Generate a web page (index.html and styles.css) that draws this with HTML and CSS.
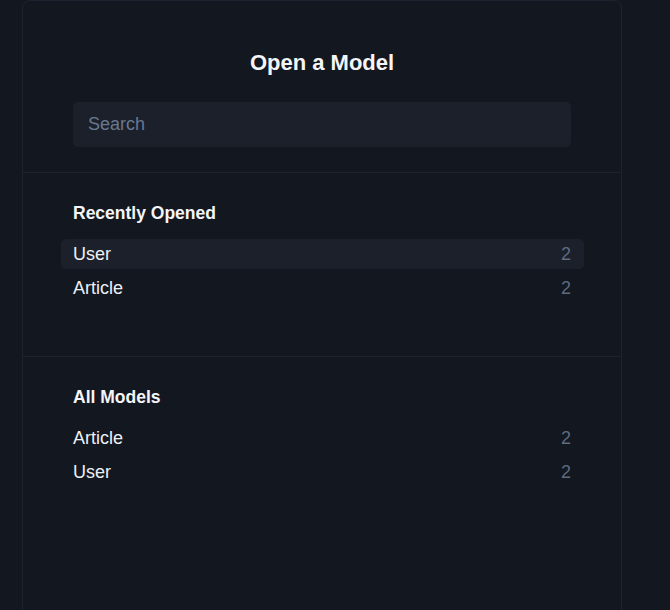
FILE: index.html
```html
<!DOCTYPE html>
<html lang="en">
<head>
<meta charset="utf-8">
<title>Open a Model</title>
<link rel="stylesheet" href="styles.css">
</head>
<body>
<div class="panel">
  <div class="top">
    <h1 class="title">Open a Model</h1>
    <input class="search" type="text" placeholder="Search" autofocus>
  </div>
  <div class="section first">
    <h2 class="heading">Recently Opened</h2>
    <ul class="list">
      <li class="row active"><span>User</span><span class="count">2</span></li>
      <li class="row"><span>Article</span><span class="count">2</span></li>
    </ul>
  </div>
  <div class="section">
    <h2 class="heading">All Models</h2>
    <ul class="list">
      <li class="row"><span>Article</span><span class="count">2</span></li>
      <li class="row"><span>User</span><span class="count">2</span></li>
    </ul>
  </div>
</div>
</body>
</html>
```

FILE: styles.css
```css
html, body {
  margin: 0;
  padding: 0;
  background: #131720;
  height: 100%;
  overflow: hidden;
}
body {
  font-family: "Liberation Sans", Arial, sans-serif;
  color: #eef0f4;
}
.panel {
  box-sizing: border-box;
  margin-left: 22px;
  width: 600px;
  height: 100%;
  border: 1px solid #1d2230;
  border-bottom: none;
  border-radius: 8px 8px 0 0;
  background: #131720;
}
.top {
  padding: 48px 50px 25px;
  border-bottom: 1px solid #1d2230;
  display: flex;
  flex-direction: column;
  align-items: stretch;
}
.title {
  margin: 0 0 25px;
  text-align: center;
  font-size: 22px;
  line-height: 28px;
  font-weight: 700;
  color: #f3f5f8;
}
.search {
  box-sizing: border-box;
  height: 45px;
  width: 100%;
  border: none;
  outline: none;
  border-radius: 5px;
  background: #1c202b;
  padding: 0 15px;
  font-family: "Liberation Sans", Arial, sans-serif;
  font-size: 18px;
  color: #eef0f4;
  caret-color: #eef0f4;
}
.search::placeholder {
  color: #687891;
}
.section {
  padding: 28px 50px 52px;
}
.section.first {
  padding-bottom: 53px;
  border-bottom: 1px solid #1d2230;
}
.heading {
  margin: 0 0 14px;
  font-size: 17.5px;
  line-height: 24px;
  font-weight: 700;
  color: #f3f5f8;
}
.list {
  list-style: none;
  margin: 0 -13px 0 -12px;
  padding: 0;
  display: flex;
  flex-direction: column;
  gap: 4px;
}
.row {
  display: flex;
  justify-content: space-between;
  align-items: center;
  height: 30px;
  padding: 0 13px 0 12px;
  border-radius: 5px;
  font-size: 18px;
  color: #eef0f4;
}
.row.active {
  background: #1c202b;
}
.count {
  color: #5f6b7f;
}
```
